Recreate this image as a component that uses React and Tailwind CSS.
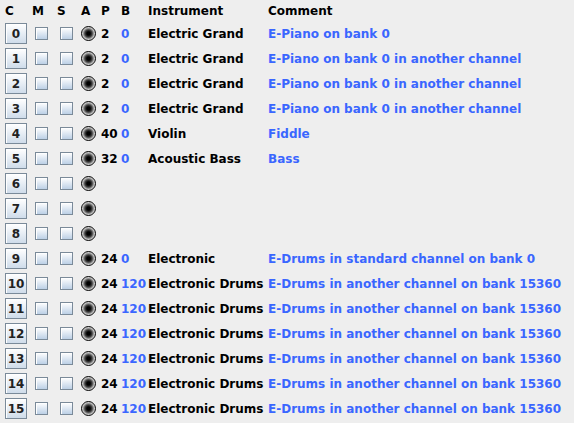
const rows = [
  { p: "2", b: "0", inst: "Electric Grand", comment: "E-Piano on bank 0" },
  { p: "2", b: "0", inst: "Electric Grand", comment: "E-Piano on bank 0 in another channel" },
  { p: "2", b: "0", inst: "Electric Grand", comment: "E-Piano on bank 0 in another channel" },
  { p: "2", b: "0", inst: "Electric Grand", comment: "E-Piano on bank 0 in another channel" },
  { p: "40", b: "0", inst: "Violin", comment: "Fiddle" },
  { p: "32", b: "0", inst: "Acoustic Bass", comment: "Bass" },
  {},
  {},
  {},
  { p: "24", b: "0", inst: "Electronic", comment: "E-Drums in standard channel on bank 0" },
  ...Array.from({ length: 6 }, () => ({
    p: "24",
    b: "120",
    inst: "Electronic Drums",
    comment: "E-Drums in another channel on bank 15360"
  }))
];

const cols = "grid grid-cols-[27px_25px_24px_20px_20px_27px_120px_1fr]";

function CheckBox() {
  return (
    <div className="ml-[5px] h-[13px] w-[13px] border border-[#7a8a99] bg-gradient-to-b from-white to-[#bcd0e6] shadow-[inset_1px_1px_0_#fff]" />
  );
}

function Radio() {
  return (
    <div className="ml-[2px] h-[15px] w-[15px] rounded-full border border-black bg-[radial-gradient(circle,#000_0%,#000_18%,#444_40%,#bbb_62%,#fff_78%)]" />
  );
}

export default function App() {
  return (
    <div
      className="h-[423px] w-[574px] overflow-hidden bg-[#eeeeee] pl-[3px] text-[12px] font-bold text-black"
      style={{ fontFamily: '"DejaVu Sans", "Liberation Sans", sans-serif' }}
    >
      <div className={`${cols} h-[21px] items-center`}>
        {["C", "M", "S", "A", "P", "B", "Instrument", "Comment"].map((h) => (
          <div key={h} className="pl-[2px]">
            {h}
          </div>
        ))}
      </div>
      {rows.map((r, i) => (
        <div key={i} className={`${cols} h-[25px] items-center whitespace-nowrap`}>
          <div className="pl-[2px]">
            <div className="flex h-[21px] w-[22px] items-center justify-center border border-[#7a8a99] bg-gradient-to-b from-white to-[#cfdcea] text-[#222] shadow-[inset_1px_1px_0_#fff]">
              {i}
            </div>
          </div>
          <div>
            <CheckBox />
          </div>
          <div>
            <CheckBox />
          </div>
          <div>
            <Radio />
          </div>
          <div className="pl-[2px]">{r.p}</div>
          <div className="pl-[2px] text-[#3a66ff]">{r.b}</div>
          <div className="pl-[2px]">{r.inst}</div>
          <div className="pl-[2px] text-[#3a66ff]">{r.comment}</div>
        </div>
      ))}
    </div>
  );
}
